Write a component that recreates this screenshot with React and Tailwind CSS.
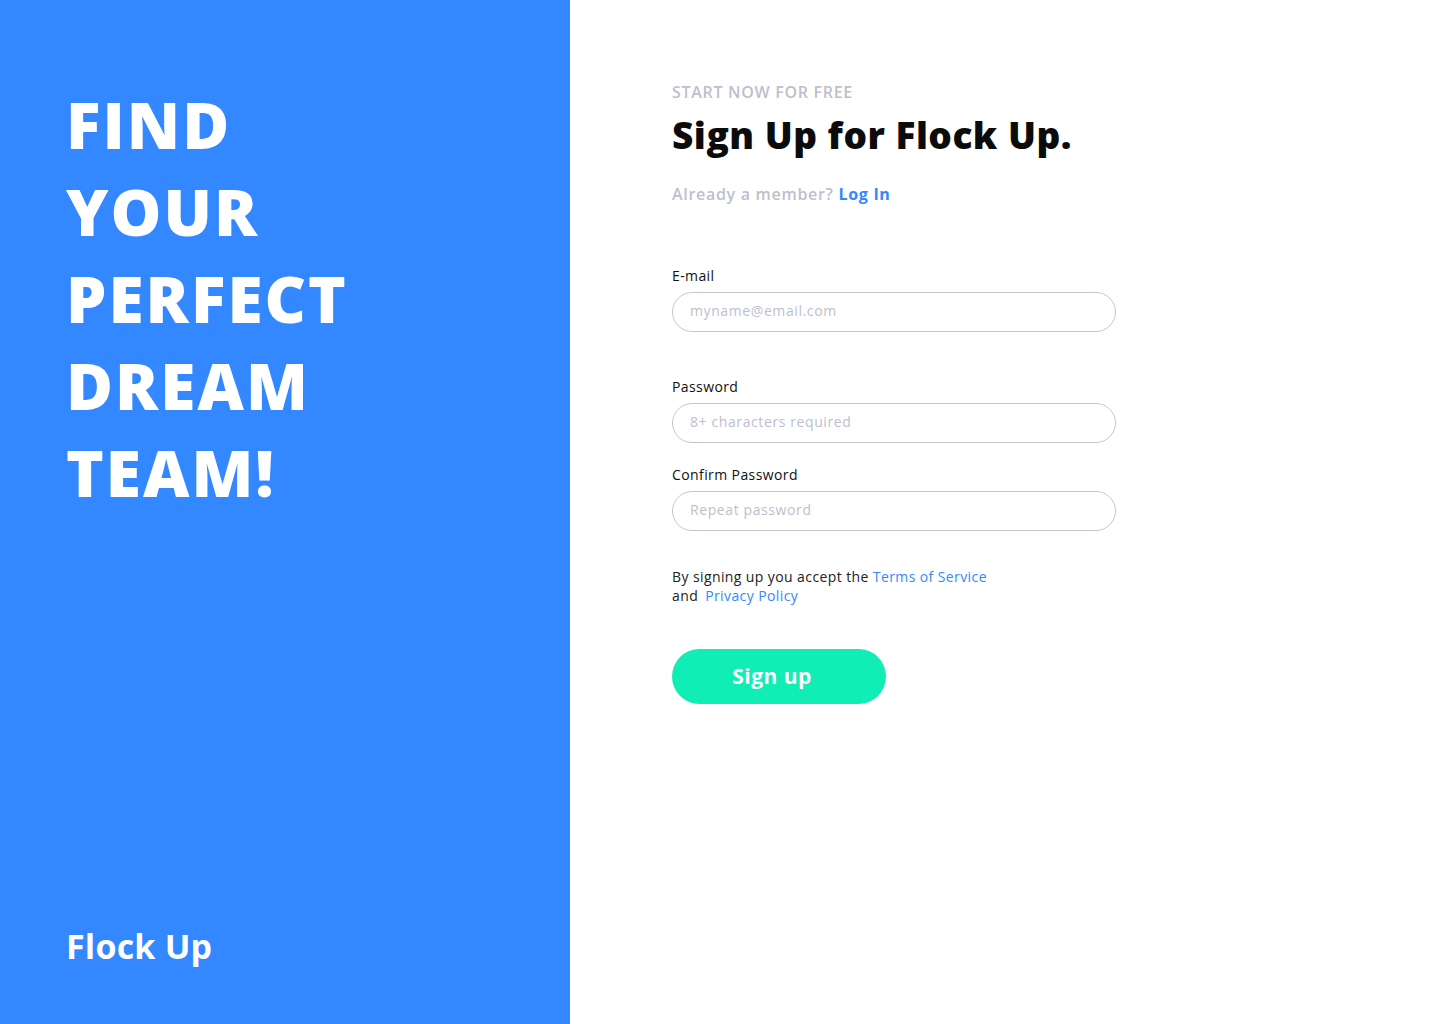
import React from 'react';

const font = { fontFamily: '"Open Sans", "Liberation Sans", sans-serif' };

const Field = ({ label, placeholder, type = 'text', className = '' }) => (
  <div className={className}>
    <label className="block text-[14px] font-medium text-[#111] tracking-[0.4px] leading-[20px]">{label}</label>
    <input
      type={type}
      placeholder={placeholder}
      className="mt-[6px] block w-[444px] h-[40px] rounded-full border border-[#c3c6d1] px-[17px] pb-[3px] text-[14px] tracking-[0.6px] text-[#111] placeholder:text-[#bcc0cc] outline-none"
    />
  </div>
);

export default function App() {
  return (
    <div className="flex w-full min-h-[1024px] bg-white" style={font}>
      {/* Left panel */}
      <div className="w-[570px] shrink-0 bg-[#3388ff] flex flex-col justify-between pl-[66px] pt-[81px] pb-[58px]">
        <h1 className="text-white font-extrabold text-[64px] leading-[87px] tracking-[2px]">
          FIND
          <br />
          YOUR
          <br />
          PERFECT
          <br />
          DREAM
          <br />
          TEAM!
        </h1>
        <div className="text-white font-bold text-[34px] leading-[40px] tracking-[0.2px]">Flock Up</div>
      </div>

      {/* Right panel */}
      <div className="flex-1 pl-[102px] pt-[81px]">
        <p className="text-[16px] font-semibold text-[#bcc0cc] tracking-[0.7px] leading-[22px]">START NOW FOR FREE</p>
        <h2 className="mt-[8px] text-[37px] font-extrabold text-[#0b0b0b] leading-[48px] tracking-[0.5px]">Sign Up for Flock Up.</h2>
        <p className="mt-[24px] text-[16px] font-semibold text-[#bcc0cc] tracking-[0.7px] leading-[22px]">
          Already a member? <a href="#" className="text-[#3388ff] font-bold">Log In</a>
        </p>

        <Field className="mt-[61px]" label="E-mail" placeholder="myname@email.com" />
        <Field className="mt-[45px]" label="Password" placeholder="8+ characters required" type="password" />
        <Field className="mt-[22px]" label="Confirm Password" placeholder="Repeat password" type="password" />

        <p className="mt-[36px] text-[14px] text-[#222] leading-[19px] tracking-[0.4px]">
          By signing up you accept the <a href="#" className="text-[#3388ff]">Terms of Service</a>
          <br />
          and <a href="#" className="ml-[3px] text-[#3388ff]">Privacy Policy</a>
        </p>

        <button className="mt-[44px] w-[214px] h-[55px] rounded-full bg-[#10edb5] pr-[14px] text-white text-[21px] font-bold tracking-[0.5px]">
          Sign up
        </button>
      </div>
    </div>
  );
}
